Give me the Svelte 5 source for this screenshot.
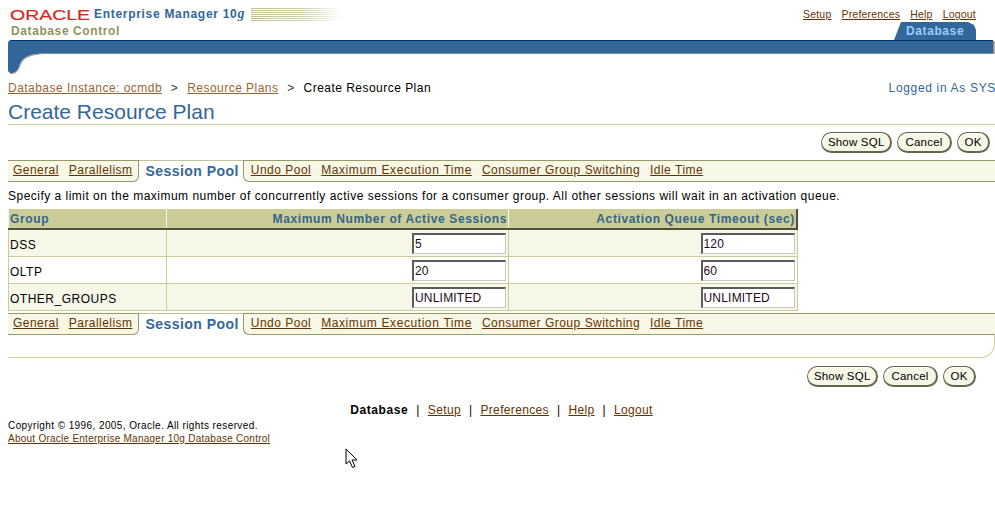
<script>
  const leftTabs = ['General', 'Parallelism'];
  const rightTabs = ['Undo Pool', 'Maximum Execution Time', 'Consumer Group Switching', 'Idle Time'];
  const rows = [
    { group: 'DSS', max: '5', timeout: '120' },
    { group: 'OLTP', max: '20', timeout: '60' },
    { group: 'OTHER_GROUPS', max: 'UNLIMITED', timeout: 'UNLIMITED' }
  ];
  const buttons = ['Show SQL', 'Cancel', 'OK'];
  const stripes = [0, 2, 4, 6, 8, 10, 12];
</script>

{#snippet tabBar()}
  <div class="tabbar">
    <div class="tabs-left">
      {#each leftTabs as tab}
        <a href="#top" class="tab">{tab}</a>
      {/each}
    </div>
    <span class="tab-active">Session Pool</span>
    <div class="tabs-right">
      {#each rightTabs as tab}
        <a href="#top" class="tab">{tab}</a>
      {/each}
    </div>
  </div>
{/snippet}

{#snippet actions()}
  {#each buttons as b}
    <button type="button" class="btn">{b}</button>
  {/each}
{/snippet}

<div class="page">
  <header class="brand">
    <div class="logo">
      <div class="logo-top">
        <svg class="oracle" width="82" height="16" viewBox="0 0 82 16">
          <text x="0" y="14" textLength="80" lengthAdjust="spacingAndGlyphs">ORACLE</text>
        </svg>
        <span class="em">Enterprise Manager 10<i>g</i></span>
        <svg class="stripes" width="90" height="14" viewBox="0 0 90 14">
          <defs>
            <linearGradient id="fade">
              <stop offset="0" stop-color="#c0c090" />
              <stop offset="0.6" stop-color="#d0d0a8" />
              <stop offset="1" stop-color="#ffffff" />
            </linearGradient>
          </defs>
          {#each stripes as y}
            <rect x="0" y={y} width="90" height="1" fill="url(#fade)" />
          {/each}
        </svg>
      </div>
      <div class="dbc">Database Control</div>
    </div>
    <div class="brand-right">
      <nav class="global">
        <a href="#top">Setup</a>
        <a href="#top">Preferences</a>
        <a href="#top">Help</a>
        <a href="#top">Logout</a>
      </nav>
      <div class="db-tab">Database</div>
    </div>
  </header>

  <div class="bar"></div>
  <svg class="bar-curve" width="40" height="21" viewBox="0 0 40 21">
    <path d="M0 0H36C22 1 15 4 12 11C10 17 8 20 4 20H2L0 18Z" fill="#336699" />
    <path d="M36 0.5C22 1.5 15.5 4.5 12.5 11.5C10.5 17.5 8 20.5 4 20.5H2" fill="none" stroke="#9a9a9a" stroke-width="1" />
  </svg>

  <div class="crumbs">
    <div>
      <a href="#top">Database Instance: ocmdb</a>
      <span class="sep">&gt;</span>
      <a href="#top">Resource Plans</a>
      <span class="sep">&gt;</span>
      <span class="cur">Create Resource Plan</span>
    </div>
    <div class="logged">Logged in As SYS</div>
  </div>

  <h1>Create Resource Plan</h1>

  <div class="actions top">{@render actions()}</div>

  {@render tabBar()}

  <p class="hint">Specify a limit on the maximum number of concurrently active sessions for a consumer group. All other sessions will wait in an activation queue.</p>

  <table>
    <thead>
      <tr>
        <th class="c1">Group</th>
        <th class="c2">Maximum Number of Active Sessions</th>
        <th class="c3">Activation Queue Timeout (sec)</th>
      </tr>
    </thead>
    <tbody>
      {#each rows as row}
        <tr>
          <td class="group">{row.group}</td>
          <td class="num"><input type="text" value={row.max} /></td>
          <td class="num"><input type="text" value={row.timeout} /></td>
        </tr>
      {/each}
    </tbody>
  </table>

  {@render tabBar()}

  <div class="closer"></div>

  <div class="actions bottom">{@render actions()}</div>

  <footer>
    <div class="foot-links">
      <b>Database</b><span class="pipe">|</span><a href="#top">Setup</a><span class="pipe">|</span><a href="#top">Preferences</a><span class="pipe">|</span><a href="#top">Help</a><span class="pipe">|</span><a href="#top">Logout</a>
    </div>
    <div class="copy">Copyright © 1996, 2005, Oracle. All rights reserved.</div>
    <a class="about" href="#top">About Oracle Enterprise Manager 10g Database Control</a>
  </footer>

  <svg class="cursor" width="14" height="22" viewBox="0 0 14 22">
    <path d="M1 1V16L4.5 12.8L7.5 19.5L10 18.4L7 12H12Z" fill="#fff" stroke="#000" stroke-width="1" />
  </svg>
</div>

<style>
  :global(body) {
    margin: 0;
    background: #fff;
    overflow: hidden;
  }

  .page {
    position: relative;
    width: 995px;
    height: 523px;
    overflow: hidden;
    font-family: "Liberation Sans", Arial, sans-serif;
    font-size: 12px;
    color: #000;
  }

  a {
    color: #663300;
  }

  .brand {
    display: flex;
    justify-content: space-between;
    height: 40px;
  }

  .logo {
    padding: 6px 0 0 10px;
  }

  .logo-top {
    display: flex;
    align-items: center;
    height: 16px;
  }

  .oracle {
    margin-right: 2px;
  }

  .oracle text {
    font-family: "Liberation Sans", sans-serif;
    font-size: 15px;
    fill: #d8281e;
    stroke: #d8281e;
    stroke-width: 0.2;
  }

  .em {
    font-weight: bold;
    font-size: 12px;
    letter-spacing: 0.7px;
    color: #336699;
  }

  .em i {
    font-family: "Liberation Serif", serif;
    font-size: 14px;
  }

  .stripes {
    margin: 2px 0 0 6px;
  }

  .dbc {
    margin: 2px 0 0 1px;
    font-weight: bold;
    font-size: 12px;
    letter-spacing: 0.6px;
    color: #92925f;
  }

  .brand-right {
    display: flex;
    flex-direction: column;
    align-items: flex-end;
    padding-right: 19px;
  }

  .global {
    display: flex;
    gap: 10px;
    padding-top: 8px;
    height: 14px;
    font-size: 10.5px;
    line-height: 13px;
    letter-spacing: 0.2px;
  }

  .db-tab {
    width: 70px;
    height: 18px;
    padding-left: 12px;
    background: #336699;
    clip-path: polygon(7px 0, 74px 0, 80px 3px, 82px 8px, 82px 18px, 0 18px);
    color: #99ccff;
    font-weight: bold;
    font-size: 12px;
    letter-spacing: 0.6px;
    line-height: 18px;
  }

  .bar {
    margin: 0 2px 0 8px;
    height: 12px;
    background: #336699;
    border-top: 1px solid #003366;
    border-top-left-radius: 4px;
    box-shadow: 1px 1px 0 #8c8c8c, 2px 1px 0 #bbb;
  }

  .bar-curve {
    display: block;
    margin-left: 8px;
  }

  .crumbs {
    display: flex;
    justify-content: space-between;
    margin: 7px 0 0 8px;
    font-size: 12px;
    line-height: 15px;
    letter-spacing: 0.47px;
    white-space: nowrap;
  }

  .crumbs a {
    color: #996633;
  }

  .sep {
    margin: 0 5px;
    color: #333;
  }

  .cur {
    color: #000;
  }

  .logged {
    margin-right: -1px;
    letter-spacing: 0.67px;
    color: #336699;
  }

  h1 {
    margin: 4px 0 0 8px;
    border-bottom: 1px solid #cccc99;
    font-size: 21px;
    font-weight: normal;
    line-height: 24px;
    color: #336699;
  }

  .actions {
    display: flex;
    justify-content: flex-end;
    gap: 5px;
  }

  .actions.top {
    margin-top: 7px;
    padding-right: 5px;
  }

  .actions.bottom {
    margin-top: 8px;
    padding-right: 19px;
  }

  .btn {
    height: 21px;
    padding: 0 6.5px;
    background: #f7f7e7;
    border: 1px solid #66664a;
    border-right-width: 2px;
    border-bottom-width: 2px;
    border-radius: 11px;
    box-shadow: inset 1px 1px 0 #fff;
    font-family: "Liberation Sans", Arial, sans-serif;
    font-size: 11.5px;
    letter-spacing: 0.2px;
    line-height: 17px;
    color: #000;
  }

  .btn:first-child {
    padding: 0 5.5px;
  }

  .btn:nth-child(2) {
    padding: 0 7.5px;
  }

  .tabbar {
    display: flex;
    align-items: stretch;
    margin: 7px 0 0 8px;
    height: 22px;
    white-space: nowrap;
  }

  .tabs-left,
  .tabs-right {
    display: flex;
    gap: 10px;
    background: #f7f7e7;
    border-top: 1px solid #999966;
    border-bottom: 1px solid #999966;
  }

  .tabs-left {
    padding: 0 6px 0 5px;
    border-right: 1px solid #999966;
    border-bottom-right-radius: 6px;
  }

  .tabs-right {
    flex: 1;
    padding-left: 7px;
    border-left: 1px solid #999966;
    border-bottom-left-radius: 6px;
  }

  .tab {
    line-height: 18px;
    letter-spacing: 0.45px;
    word-spacing: 0.3px;
  }

  .tabs-right .tab:nth-child(2) {
    letter-spacing: 0.58px;
  }

  .tab-active {
    padding: 1px 4px 0 6px;
    background: #fff;
    border-top: 1px solid #c4c49c;
    font-size: 14px;
    font-weight: bold;
    line-height: 19px;
    letter-spacing: 0.45px;
    color: #336699;
  }

  .hint {
    margin: 7px 0 0 8px;
    line-height: 15px;
    letter-spacing: 0.485px;
    white-space: nowrap;
  }

  table {
    margin: 5px 0 0 8px;
    width: 790px;
    table-layout: fixed;
    border-collapse: collapse;
    border: 1px solid #cccc99;
  }

  th {
    height: 18px;
    padding: 0 1px;
    background: #cccc99;
    border-left: 1px solid #f7f7e7;
    border-bottom: 2px solid #4f4f3c;
    font-size: 12px;
    letter-spacing: 0.63px;
    color: #336688;
    text-align: right;
  }

  th.c1 {
    width: 155px;
    text-align: left;
  }

  th.c2 {
    width: 339px;
  }

  th.c3 {
    border-right: 2px solid #4f4f3c;
  }

  td {
    height: 26px;
    padding: 0 2px 0 1px;
    border: 1px solid #cccc99;
  }

  td.group {
    height: 22px;
    padding-top: 4px;
    letter-spacing: 0.5px;
  }

  tbody tr:nth-child(odd) td {
    background: #f7f7e7;
  }

  .num {
    text-align: right;
  }

  input {
    box-sizing: border-box;
    width: 94px;
    height: 21px;
    padding: 0 1px;
    background: #fff;
    border-style: solid;
    border-width: 2px 1px 1px 2px;
    border-color: #5c5c5c #c8c8c8 #c8c8c8 #5c5c5c;
    font-family: "Liberation Sans", Arial, sans-serif;
    font-size: 12px;
    letter-spacing: 0.2px;
    color: #220a22;
    vertical-align: middle;
  }

  table + .tabbar {
    margin-top: 2px;
  }

  .closer {
    margin-left: 8px;
    width: 986px;
    height: 22px;
    border-bottom: 1px solid #cccc99;
    border-right: 1px solid #cccc99;
    border-bottom-right-radius: 14px;
  }

  footer {
    margin: 16px 0 0 8px;
  }

  .foot-links {
    line-height: 15px;
    text-align: center;
    letter-spacing: 0.35px;
  }

  .foot-links b {
    letter-spacing: 0.6px;
  }

  .pipe {
    margin: 0 8px;
    color: #000;
  }

  .copy {
    margin-top: 1px;
    font-size: 10px;
    line-height: 13px;
    letter-spacing: 0.41px;
  }

  .about {
    display: block;
    font-size: 10px;
    line-height: 13px;
    letter-spacing: 0.25px;
  }

  .cursor {
    position: absolute;
    left: 345px;
    top: 448px;
  }
</style>
